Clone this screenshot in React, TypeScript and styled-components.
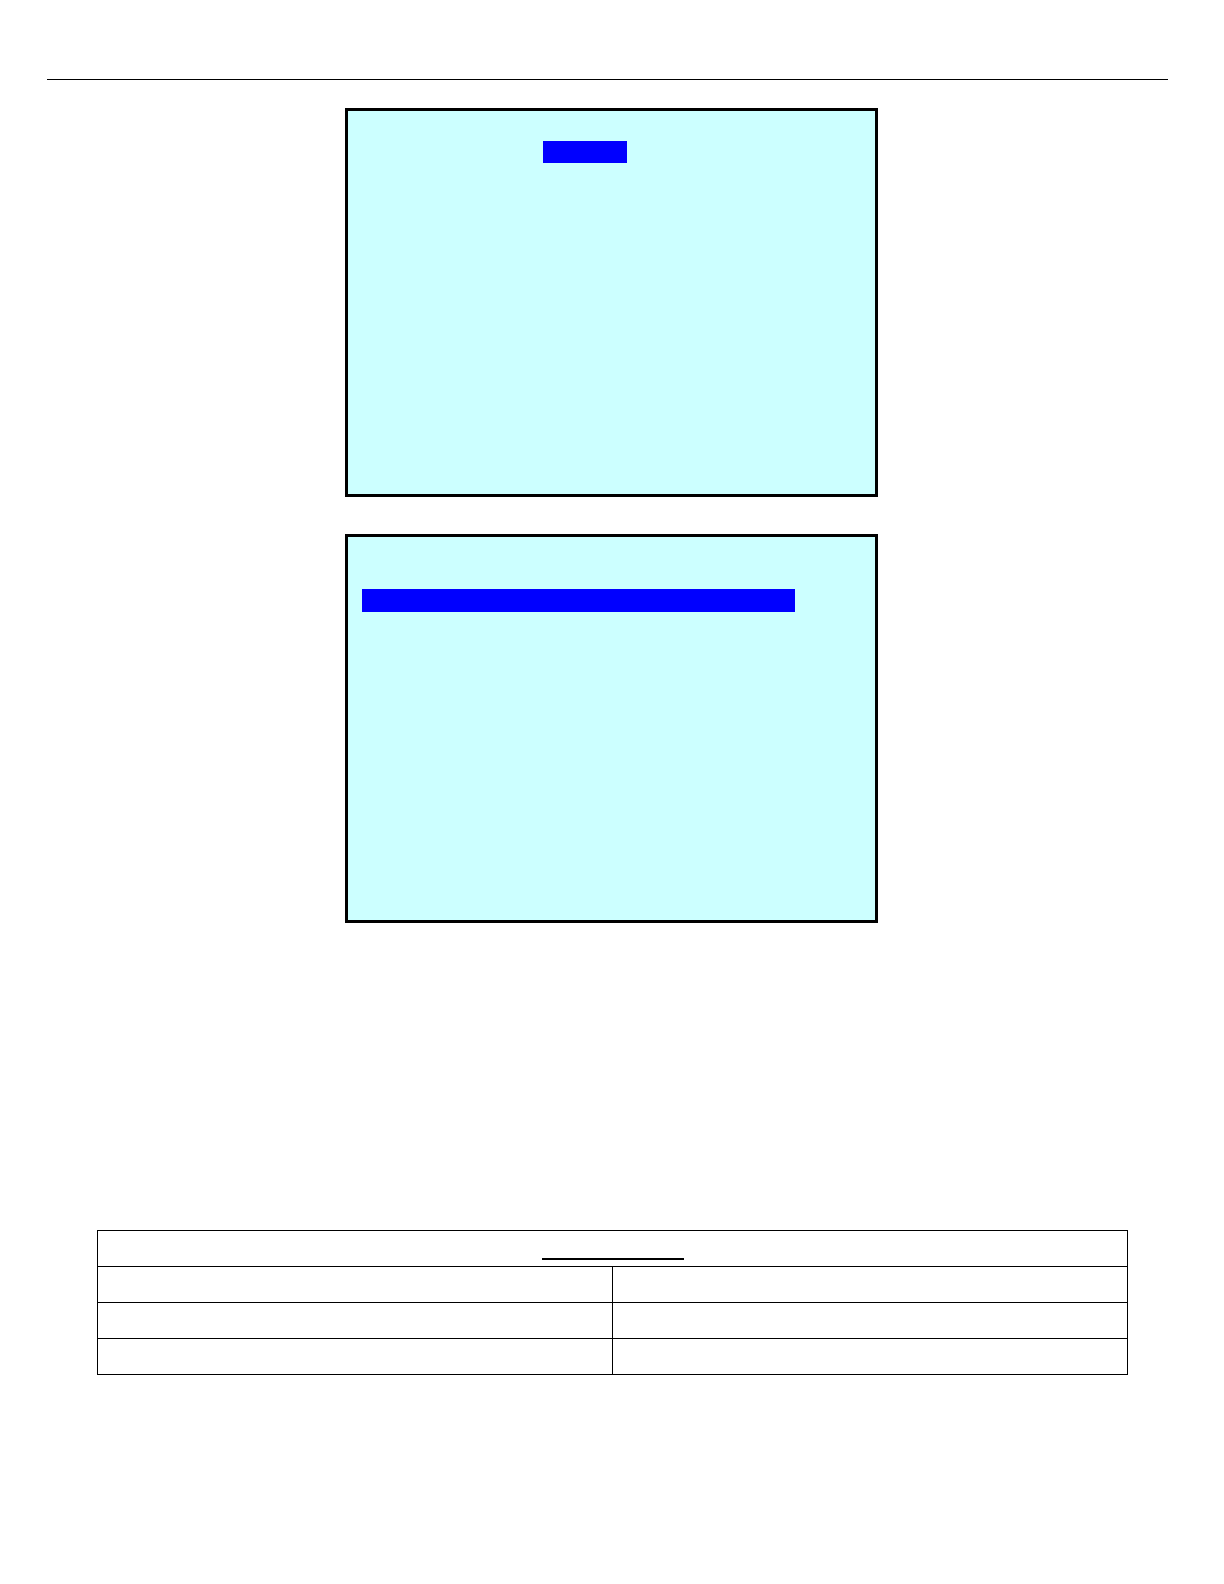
import React from 'react';
import styled, { createGlobalStyle } from 'styled-components';

const GlobalStyle = createGlobalStyle`
  *, *::before, *::after { box-sizing: border-box; }
  body {
    margin: 0;
    background: #ffffff;
    color: #000000;
    font-family: "Liberation Sans", Arial, sans-serif;
  }
`;

const Page = styled.div`
  min-height: 100vh;
  padding: 79px 56px 80px 47px;
`;

const HeaderRule = styled.hr`
  height: 1px;
  margin: 0;
  border: 0;
  background: #000000;
`;

const Screens = styled.main`
  display: flex;
  flex-direction: column;
  align-items: center;
  gap: 37px;
  padding: 28px 0 0 8px;
`;

const Screen = styled.section`
  display: flex;
  flex-direction: column;
  width: 100%;
  max-width: 533px;
  min-height: 389px;
  border: 3px solid #000000;
  background: #ccffff;
`;

const TitleRow = styled.div`
  display: flex;
  padding: 30px 0 0 195px;
`;

const MenuRow = styled.div`
  display: flex;
  padding: 52px 80px 0 14px;
`;

const Highlight = styled.div<{ $wide?: boolean }>`
  width: ${({ $wide }) => ($wide ? '100%' : '84px')};
  height: ${({ $wide }) => ($wide ? '23px' : '22px')};
  background: #0000ff;
`;

const TableArea = styled.section`
  padding: 307px 40px 0 50px;
`;

const Table = styled.table`
  width: 100%;
  table-layout: fixed;
  border-collapse: collapse;
`;

const Row = styled.tr`
  height: 36px;
`;

const Cell = styled.td`
  padding: 0;
  border: 1px solid #000000;
`;

const HeadingCell = styled.th`
  padding: 0 0 6px;
  border: 1px solid #000000;
  vertical-align: bottom;
`;

const Underline = styled.div`
  width: 142px;
  height: 2px;
  margin: 0 auto;
  background: #000000;
`;

const bodyRows = [0, 1, 2];

export default function App() {
  return (
    <>
      <GlobalStyle />
      <Page>
        <HeaderRule />
        <Screens>
          <Screen>
            <TitleRow>
              <Highlight />
            </TitleRow>
          </Screen>
          <Screen>
            <MenuRow>
              <Highlight $wide />
            </MenuRow>
          </Screen>
        </Screens>
        <TableArea>
          <Table>
            <thead>
              <Row>
                <HeadingCell colSpan={2}>
                  <Underline />
                </HeadingCell>
              </Row>
            </thead>
            <tbody>
              {bodyRows.map((row) => (
                <Row key={row}>
                  <Cell />
                  <Cell />
                </Row>
              ))}
            </tbody>
          </Table>
        </TableArea>
      </Page>
    </>
  );
}
